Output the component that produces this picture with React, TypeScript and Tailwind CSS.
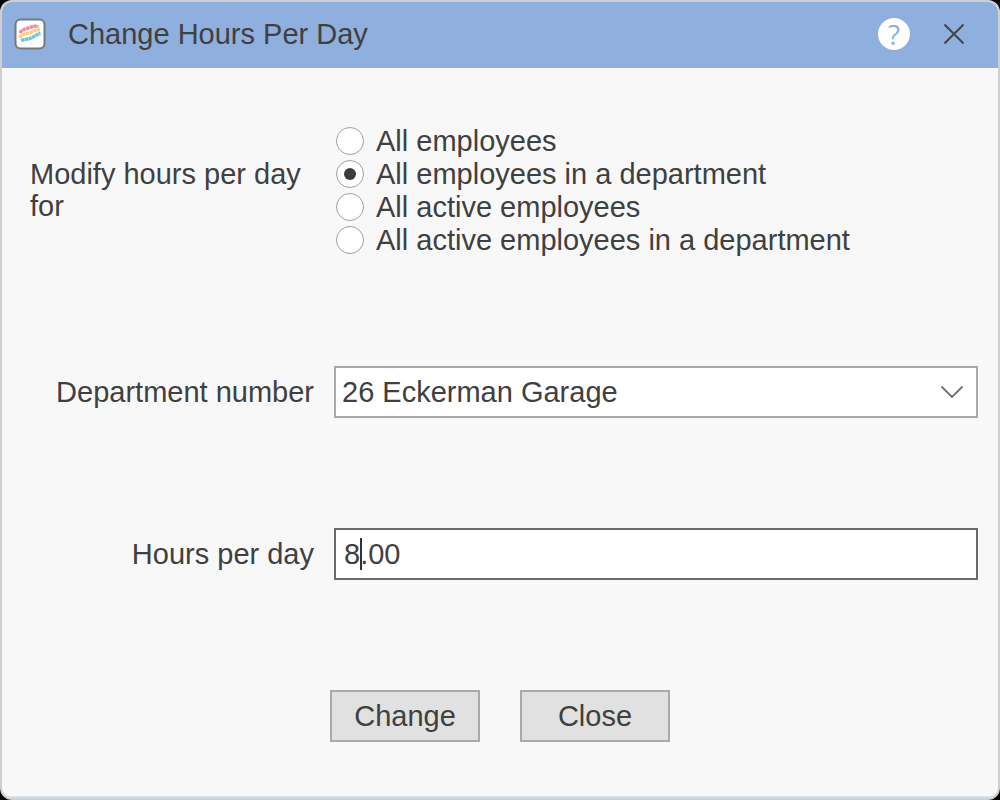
import { useState } from 'react';

const SCOPES = [
  { value: 'all', label: 'All employees' },
  { value: 'department', label: 'All employees in a department' },
  { value: 'active', label: 'All active employees' },
  { value: 'active-department', label: 'All active employees in a department' },
];

function AppLogo() {
  return (
    <svg className="size-8 shrink-0" viewBox="0 0 32 32" fill="none" aria-hidden="true">
      <rect x="1.5" y="1.5" width="29" height="29" rx="5" fill="#fff" stroke="#77787c" strokeWidth="2" />
      <g strokeWidth="3.4" strokeDasharray="3.4 0.4">
        <path d="M6 15C8 11 12 11 16 9.500C19 8 22 7.500 24 9" stroke="#f48a94" />
        <path d="M5.500 19.500C9 15 13 16.500 17 14.500C20 12.500 23 12 26 11.500" stroke="#fad07a" />
        <path d="M7 22.500C11 21 15 21.500 19 19C22 17 24 16 26.500 15.500" stroke="#62c6e8" />
      </g>
    </svg>
  );
}

function TitleBar() {
  return (
    <header className="flex h-[66px] items-center bg-[#8fb0de] pr-[34px] pb-0.5 pl-3">
      <AppLogo />
      <h1 className="ml-[22px] flex-1">Change Hours Per Day</h1>
      <button
        type="button"
        aria-label="Help"
        className="flex size-8 items-center justify-center rounded-full bg-white font-['Open_Sans',sans-serif] text-[28px] font-normal text-[#8fb0de]"
      >
        ?
      </button>
      <button type="button" aria-label="Close window" className="ml-[34px]">
        <svg className="size-5" viewBox="0 0 20 20" fill="none" stroke="#444" strokeWidth="2">
          <path d="M0.500 0.500L19.500 19.500M19.500 0.500L0.500 19.500" />
        </svg>
      </button>
    </header>
  );
}

export default function App() {
  const [scope, setScope] = useState('department');
  const [department, setDepartment] = useState('26');
  const [hours, setHours] = useState('8.00');
  const [editing, setEditing] = useState(false);

  return (
    <div className="flex min-h-screen bg-black font-['Liberation_Sans',Arial,sans-serif] text-[29px] leading-8 text-[#404040]">
      <main className="flex flex-1 flex-col overflow-hidden rounded-xl border-2 border-[#cfcfcf] bg-[#f8f8f8]">
        <TitleBar />
        <form
          className="flex flex-1 flex-col gap-[110px] border-b-2 border-[#d5e0ef] pt-14 pr-5 pb-12 pl-7"
          onSubmit={(e) => e.preventDefault()}
        >
          <div role="radiogroup" aria-labelledby="scope-label" className="flex items-center gap-5">
            <span id="scope-label" className="w-[284px] shrink-0">
              Modify hours per day for
            </span>
            <div className="flex flex-1 flex-col pl-0.5">
              {SCOPES.map((s) => (
                <label key={s.value} className="flex h-[33px] items-center gap-3">
                  <input
                    type="radio"
                    name="scope"
                    value={s.value}
                    checked={scope === s.value}
                    onChange={() => setScope(s.value)}
                    className="flex size-7 shrink-0 appearance-none items-center justify-center rounded-full border border-[#a0a0a0] bg-white checked:before:size-3 checked:before:rounded-full checked:before:bg-[#3c3c3a] checked:before:content-['']"
                  />
                  {s.label}
                </label>
              ))}
            </div>
          </div>

          <div className="flex items-center gap-5">
            <label htmlFor="department" className="w-[284px] shrink-0 text-right">
              Department number
            </label>
            <div className="relative flex-1">
              <select
                id="department"
                value={department}
                onChange={(e) => setDepartment(e.target.value)}
                className="block h-13 w-full appearance-none border-2 border-[#a9a9a9] bg-white pr-14 pl-1.5"
              >
                <option value="26">26 Eckerman Garage</option>
              </select>
              <svg
                className="pointer-events-none absolute top-5 right-3.5 h-3 w-6"
                viewBox="0 0 24 12"
                fill="none"
                stroke="#777"
                strokeWidth="2"
              >
                <path d="M1.500 0.500L12 11L22.500 0.500" />
              </svg>
            </div>
          </div>

          <div className="flex items-center gap-5">
            <label htmlFor="hours" className="w-[284px] shrink-0 text-right">
              Hours per day
            </label>
            <div className="relative flex-1">
              <input
                id="hours"
                type="text"
                inputMode="decimal"
                value={hours}
                onChange={(e) => setHours(e.target.value)}
                onFocus={() => setEditing(true)}
                onBlur={() => setEditing(false)}
                className="block h-13 w-full border-2 border-[#6b6b6b] bg-white px-2 outline-none"
              />
              {!editing && (
                <span className="pointer-events-none absolute top-2.5 left-[26px] h-8 w-0.5 bg-[#333]" />
              )}
            </div>
          </div>

          <div className="-ml-2 flex justify-center gap-10">
            <button type="submit" className="h-13 w-[150px] border-2 border-[#a9a9a9] bg-[#e1e1e1]">
              Change
            </button>
            <button type="button" className="h-13 w-[150px] border-2 border-[#a9a9a9] bg-[#e1e1e1]">
              Close
            </button>
          </div>
        </form>
      </main>
    </div>
  );
}
